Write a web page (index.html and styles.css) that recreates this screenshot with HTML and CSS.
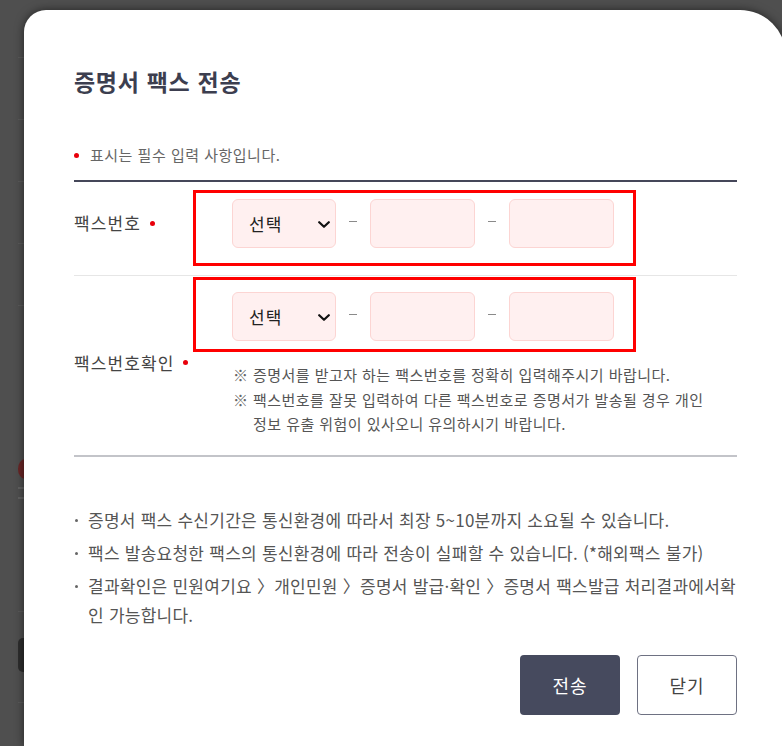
FILE: index.html
```html
<!DOCTYPE html>
<html lang="ko">
<head>
<meta charset="utf-8">
<title>증명서 팩스 전송</title>
<link rel="stylesheet" href="styles.css">
</head>
<body>
<div class="backdrop">
  <div class="ghost-line g1"></div>
  <div class="ghost-line"></div>
  <div class="ghost-line"></div>
  <div class="ghost-line"></div>
  <div class="ghost-line"></div>
  <div class="ghost-dot"></div>
  <div class="ghost-text"></div>
  <div class="ghost-text"></div>
  <div class="ghost-line g2"></div>
  <div class="ghost-block"></div>
  <div class="ghost-line g3"></div>
</div>

<div class="modal">
  <h1 class="title">증명서 팩스 전송</h1>
  <p class="req-note"><span class="req-dot"></span>표시는 필수 입력 사항입니다.</p>

  <div class="form">
    <div class="row row-first">
      <div class="label label-first">팩스번호<span class="req-dot dot-after"></span></div>
      <div class="cell">
        <div class="fieldbox box-first">
          <div class="select"><span>선택</span><svg class="chev" width="12" height="8" viewBox="0 0 12 8"><path d="M1.2 1.2 L6 5.8 L10.8 1.2" fill="none" stroke="#111" stroke-width="2.2" stroke-linecap="round" stroke-linejoin="round"/></svg></div>
          <span class="dash"></span>
          <div class="input"></div>
          <span class="dash"></span>
          <div class="input"></div>
        </div>
      </div>
    </div>

    <div class="row row-second">
      <div class="label label-second">팩스번호확인<span class="req-dot dot-after"></span></div>
      <div class="cell">
        <div class="fieldbox box-second">
          <div class="select"><span>선택</span><svg class="chev" width="12" height="8" viewBox="0 0 12 8"><path d="M1.2 1.2 L6 5.8 L10.8 1.2" fill="none" stroke="#111" stroke-width="2.2" stroke-linecap="round" stroke-linejoin="round"/></svg></div>
          <span class="dash"></span>
          <div class="input"></div>
          <span class="dash"></span>
          <div class="input"></div>
        </div>
        <div class="notes">
          <p class="note"><span class="mark">※</span>증명서를 받고자 하는 팩스번호를 정확히 입력해주시기 바랍니다.</p>
          <p class="note"><span class="mark">※</span>팩스번호를 잘못 입력하여 다른 팩스번호로 증명서가 발송될 경우 개인 정보 유출 위험이 있사오니 유의하시기 바랍니다.</p>
        </div>
      </div>
    </div>
  </div>

  <ul class="info">
    <li>증명서 팩스 수신기간은 통신환경에 따라서 최장 5~10분까지 소요될 수 있습니다.</li>
    <li>팩스 발송요청한 팩스의 통신환경에 따라 전송이 실패할 수 있습니다. (*해외팩스 불가)</li>
    <li>결과확인은 민원여기요 〉개인민원 〉증명서 발급·확인 〉증명서 팩스발급 처리결과에서확인 가능합니다.</li>
  </ul>

  <div class="actions">
    <button class="btn btn-primary" type="button">전송</button>
    <button class="btn btn-secondary" type="button">닫기</button>
  </div>
</div>
</body>
</html>
```

FILE: styles.css
```css
* { box-sizing: border-box; }

html, body {
  margin: 0;
  padding: 0;
  width: 782px;
  height: 746px;
  overflow: hidden;
}

body {
  background: #4f4f4f;
  font-family: "Noto Sans CJK KR", "Noto Sans", sans-serif;
  position: relative;
}

/* dimmed page underneath the modal */
.backdrop {
  display: flex;
  flex-direction: column;
  padding-left: 18px;
  width: 40px;
}
.ghost-line {
  height: 1px;
  width: 20px;
  background: #5a5a5a;
  margin-top: 61px;
}
.ghost-line.g1 { margin-top: 57px; }
.ghost-dot {
  width: 14px;
  height: 20px;
  border-radius: 50%;
  background: #6a2626;
  margin-top: 153px;
}
.ghost-text {
  height: 2px;
  width: 10px;
  background: #626262;
  margin-top: 8px;
}
.ghost-line.g2 { margin-top: 112px; }
.ghost-block {
  width: 14px;
  height: 34px;
  border-radius: 5px 0 0 5px;
  background: #2d2d2d;
  margin-top: 26px;
}
.ghost-line.g3 { margin-top: 30px; }

/* modal */
.modal {
  position: absolute;
  left: 24px;
  top: 10px;
  width: 762px;
  height: 736px;
  background: #fff;
  border-radius: 22px 46px 0 0;
  box-shadow: 0 0 10px rgba(0, 0, 0, 0.55);
  padding: 55px 49px 0 50px;
}

.title {
  margin: 0;
  font-size: 23px;
  line-height: 32px;
  font-weight: 700;
  color: #3c3e4f;
  letter-spacing: 0.7px;
}

.req-note {
  margin: 48px 0 0;
  font-size: 15px;
  line-height: 20px;
  color: #666;
  letter-spacing: 0.5px;
  display: flex;
  align-items: center;
}

.req-dot {
  display: inline-block;
  width: 5px;
  height: 5px;
  border-radius: 50%;
  background: #e8000b;
  margin-right: 11px;
  flex: none;
}
.dot-after {
  margin: 0 0 0 9px;
  vertical-align: middle;
}

.form {
  margin-top: 15px;
  border-top: 2px solid #454759;
}

.row {
  display: grid;
  grid-template-columns: 119px 1fr;
  align-items: center;
}
.row-first {
  padding: 8px 0 9px;
  border-bottom: 1px solid #e6e6e6;
}
.row-second {
  padding: 1px 0 18px;
  border-bottom: 2px solid #c3c4c9;
}

.label {
  font-size: 17px;
  line-height: 24px;
  letter-spacing: 1.1px;
  color: #444;
  display: flex;
  align-items: center;
}
.label-first { margin-bottom: 10px; }
.label-second { margin-top: 12px; }

.fieldbox {
  width: 443px;
  border: 3px solid #ff0000;
  display: flex;
  align-items: center;
  padding-left: 36px;
}
.box-first { padding-top: 6px; padding-bottom: 15px; }
.box-second { padding-top: 12px; padding-bottom: 8px; }

.select,
.input {
  height: 49px;
  background: #fff0f0;
  border: 1px solid #fcd5d3;
  border-radius: 6px;
  flex: none;
}
.select {
  width: 104px;
  display: flex;
  align-items: center;
  justify-content: space-between;
  padding: 0 5px 0 16px;
  font-size: 17px;
  letter-spacing: 1px;
  color: #222;
}
.chev { display: block; margin-top: 2px; }
.input { width: 105px; }

.dash {
  width: 8px;
  height: 1px;
  background: #8a8a8a;
  margin: 0 13px 4px;
  flex: none;
}

.notes {
  margin-top: 11px;
  padding-left: 40px;
  padding-right: 16px;
}
.note {
  margin: 0;
  font-size: 15px;
  line-height: 24.5px;
  letter-spacing: 0.45px;
  color: #555;
  padding-left: 20px;
  word-break: keep-all;
}
.mark {
  display: inline-block;
  width: 20px;
  margin-left: -20px;
  letter-spacing: 0;
  color: #666;
}

.info {
  list-style: none;
  margin: 48px 0 0;
  padding: 0;
}
.info li {
  font-size: 17px;
  line-height: 29px;
  letter-spacing: 0.25px;
  color: #555;
  padding-left: 14px;
  margin-bottom: 4px;
}
.info li::before {
  content: "";
  display: inline-block;
  width: 3px;
  height: 3px;
  background: #666;
  border-radius: 50%;
  margin-left: -13px;
  margin-right: 10px;
  vertical-align: 5px;
}

.actions {
  margin-top: 26px;
  display: flex;
  justify-content: flex-end;
  gap: 17px;
}
.btn {
  width: 100px;
  height: 60px;
  border-radius: 4px;
  font-family: inherit;
  font-size: 18px;
  letter-spacing: 1px;
  cursor: pointer;
}
.btn-primary {
  background: #464a5e;
  color: #fff;
  border: none;
}
.btn-secondary {
  background: #fff;
  color: #444;
  border: 1px solid #6e7182;
}
```
